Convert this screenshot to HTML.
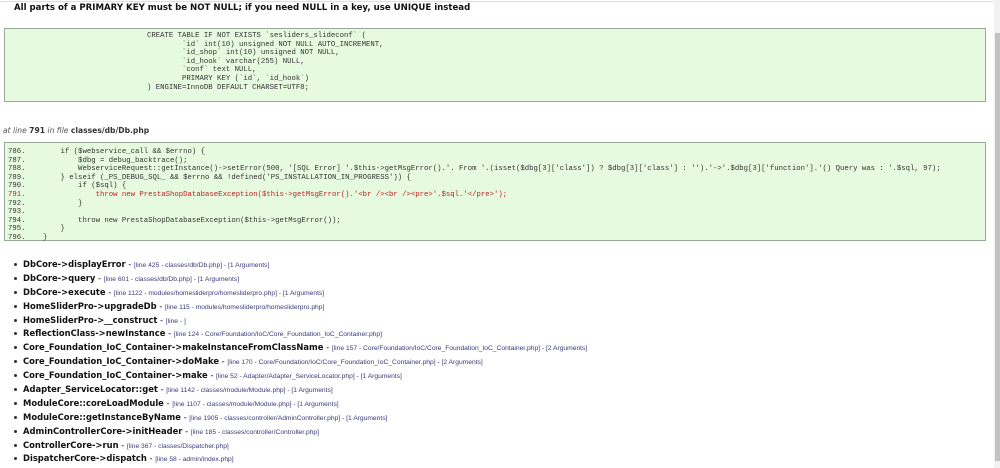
<!DOCTYPE html>
<html><head><meta charset="utf-8"><style>
body{margin:0;width:1000px;height:468px;overflow:hidden;background:#fff;position:relative;font-family:"DejaVu Sans","Liberation Sans",sans-serif}
.top{position:absolute;left:0;top:1px;width:994px;height:1px;background:#ddd}
.title{position:absolute;left:14px;top:3px;font-size:8.6px;font-weight:bold;color:#111}
.box{position:absolute;left:4px;width:980px;background:#e6fadf;border:1px solid #9aa89a;}
pre{margin:0;font-family:"Liberation Mono",monospace;font-size:7.3px;line-height:8.6px;color:#333}
.atl{position:absolute;left:3px;top:126px;font-size:7.6px;color:#333}
.atl i{font-style:italic;color:#555}
ul{position:absolute;left:0;top:258px;margin:0;padding:0;list-style:none}
li{position:relative;height:13.9px;padding-left:23px;font-size:8.4px;line-height:13px;white-space:nowrap;color:#111}
li:before{content:"";position:absolute;left:14px;top:5px;width:3px;height:3px;border-radius:50%;background:#333}
li b{font-weight:bold}
li span{font-family:"Liberation Sans",sans-serif;font-size:6.7px;color:#3a3a7a}
.sb{position:absolute;left:994px;top:0;width:6px;height:468px;background:#f2f2f2}
.th{position:absolute;left:995px;top:33px;width:5px;height:428px;background:#c2c2c2}
.red{color:#b22}
</style></head><body>
<div class="top"></div>
<div class="title">All parts of a PRIMARY KEY must be NOT NULL; if you need NULL in a key, use UNIQUE instead</div>
<div class="box" style="top:28px;height:72px"><pre style="position:absolute;left:142px;top:3px">CREATE TABLE IF NOT EXISTS `sesliders_slideconf` (
        `id` int(10) unsigned NOT NULL AUTO_INCREMENT,
        `id_shop` int(10) unsigned NOT NULL,
        `id_hook` varchar(255) NULL,
        `conf` text NULL,
        PRIMARY KEY (`id`, `id_hook`)
) ENGINE=InnoDB DEFAULT CHARSET=UTF8;</pre></div>
<div class="atl"><i>at line</i> <b>791</b> <i>in file</i> <b>classes/db/Db.php</b></div>
<div class="box" style="top:142px;height:97px"><pre style="position:absolute;left:3px;top:5px">786.        if ($webservice_call &amp;&amp; $errno) {
787.            $dbg = debug_backtrace();
788.            WebserviceRequest::getInstance()-&gt;setError(500, '[SQL Error] '.$this-&gt;getMsgError().'. From '.(isset($dbg[3]['class']) ? $dbg[3]['class'] : '').'-&gt;'.$dbg[3]['function'].'() Query was : '.$sql, 97);
789.        } elseif (_PS_DEBUG_SQL_ &amp;&amp; $errno &amp;&amp; !defined('PS_INSTALLATION_IN_PROGRESS')) {
790.            if ($sql) {
<span class="red">791.                throw new PrestaShopDatabaseException($this-&gt;getMsgError().'&lt;br /&gt;&lt;br /&gt;&lt;pre&gt;'.$sql.'&lt;/pre&gt;');</span>
792.            }
793.
794.            throw new PrestaShopDatabaseException($this-&gt;getMsgError());
795.        }
796.    }</pre></div>
<ul>
<li><b>DbCore-&gt;displayError</b> - <span>[line 425 - classes/db/Db.php] - [1 Arguments]</span></li>
<li><b>DbCore-&gt;query</b> - <span>[line 601 - classes/db/Db.php] - [1 Arguments]</span></li>
<li><b>DbCore-&gt;execute</b> - <span>[line 1122 - modules/homesliderpro/homesliderpro.php] - [1 Arguments]</span></li>
<li><b>HomeSliderPro-&gt;upgradeDb</b> - <span>[line 115 - modules/homesliderpro/homesliderpro.php]</span></li>
<li><b>HomeSliderPro-&gt;__construct</b> - <span>[line - ]</span></li>
<li><b>ReflectionClass-&gt;newInstance</b> - <span>[line 124 - Core/Foundation/IoC/Core_Foundation_IoC_Container.php]</span></li>
<li><b>Core_Foundation_IoC_Container-&gt;makeInstanceFromClassName</b> - <span>[line 157 - Core/Foundation/IoC/Core_Foundation_IoC_Container.php] - [2 Arguments]</span></li>
<li><b>Core_Foundation_IoC_Container-&gt;doMake</b> - <span>[line 170 - Core/Foundation/IoC/Core_Foundation_IoC_Container.php] - [2 Arguments]</span></li>
<li><b>Core_Foundation_IoC_Container-&gt;make</b> - <span>[line 52 - Adapter/Adapter_ServiceLocator.php] - [1 Arguments]</span></li>
<li><b>Adapter_ServiceLocator::get</b> - <span>[line 1142 - classes/module/Module.php] - [1 Arguments]</span></li>
<li><b>ModuleCore::coreLoadModule</b> - <span>[line 1107 - classes/module/Module.php] - [1 Arguments]</span></li>
<li><b>ModuleCore::getInstanceByName</b> - <span>[line 1905 - classes/controller/AdminController.php] - [1 Arguments]</span></li>
<li><b>AdminControllerCore-&gt;initHeader</b> - <span>[line 185 - classes/controller/Controller.php]</span></li>
<li><b>ControllerCore-&gt;run</b> - <span>[line 367 - classes/Dispatcher.php]</span></li>
<li><b>DispatcherCore-&gt;dispatch</b> - <span>[line 58 - admin/index.php]</span></li>
</ul>
<div class="sb"></div><div class="th"></div>
</body></html>
